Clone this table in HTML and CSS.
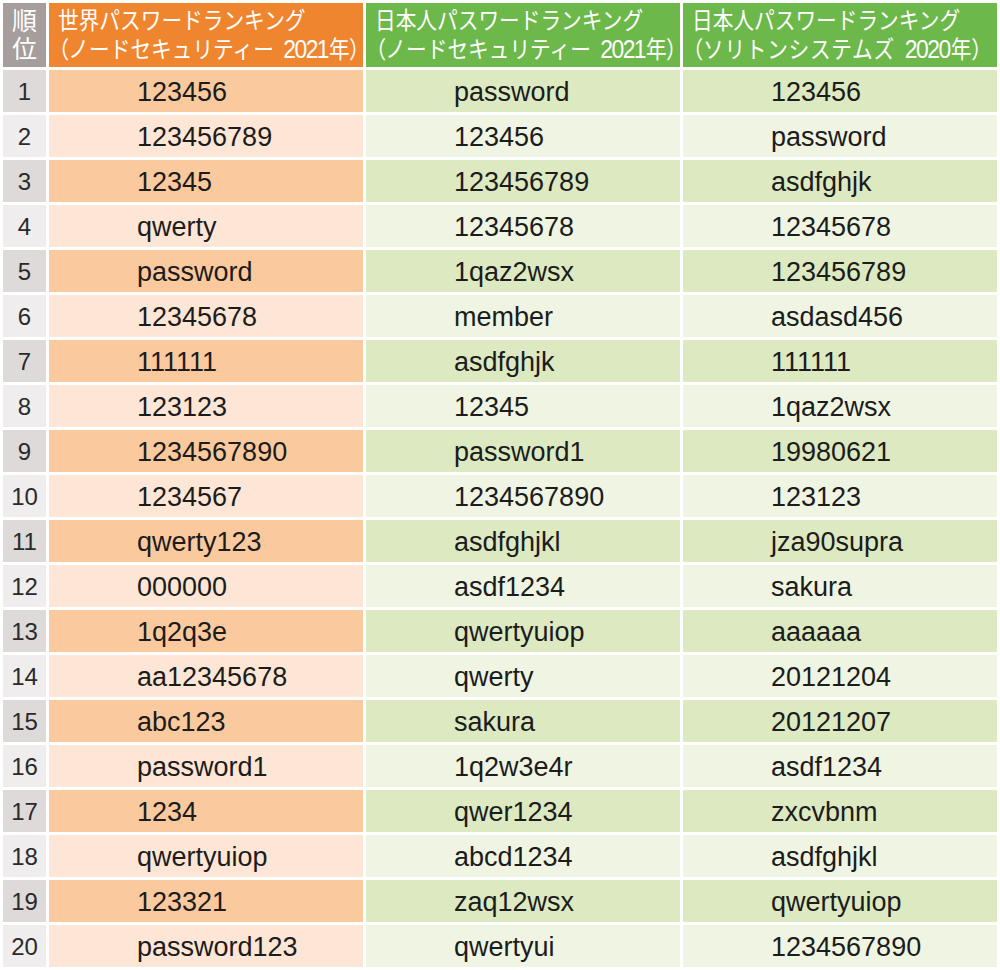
FILE: index.html
```html
<!DOCTYPE html>
<html lang="ja">
<head>
<meta charset="utf-8">
<title>パスワードランキング</title>
<link rel="stylesheet" href="styles.css">
</head>
<body>
<table class="rank-table">
  <colgroup>
    <col class="col-rank">
    <col class="col-data">
    <col class="col-data">
    <col class="col-data">
  </colgroup>
  <thead>
    <tr>
      <th class="h-rank"><span>順</span><span>位</span></th>
      <th class="h-world"><span class="l1">世界パスワードランキング</span><span class="l2"><span class="p">（</span>ノードセキュリティー <span class="y">2021</span>年<span class="p">）</span></span></th>
      <th class="h-jp"><span class="l1">日本人パスワードランキング</span><span class="l2"><span class="p">（</span>ノードセキュリティー <span class="y">2021</span>年<span class="p">）</span></span></th>
      <th class="h-jp"><span class="l1">日本人パスワードランキング</span><span class="l2 loose"><span class="p">（</span>ソリトンシステムズ <span class="y">2020</span>年<span class="p">）</span></span></th>
    </tr>
  </thead>
  <tbody>
    <tr><td class="rank">1</td><td class="world">123456</td><td class="jp">password</td><td class="jp">123456</td></tr>
    <tr><td class="rank">2</td><td class="world">123456789</td><td class="jp">123456</td><td class="jp">password</td></tr>
    <tr><td class="rank">3</td><td class="world">12345</td><td class="jp">123456789</td><td class="jp">asdfghjk</td></tr>
    <tr><td class="rank">4</td><td class="world">qwerty</td><td class="jp">12345678</td><td class="jp">12345678</td></tr>
    <tr><td class="rank">5</td><td class="world">password</td><td class="jp">1qaz2wsx</td><td class="jp">123456789</td></tr>
    <tr><td class="rank">6</td><td class="world">12345678</td><td class="jp">member</td><td class="jp">asdasd456</td></tr>
    <tr><td class="rank">7</td><td class="world">111111</td><td class="jp">asdfghjk</td><td class="jp">111111</td></tr>
    <tr><td class="rank">8</td><td class="world">123123</td><td class="jp">12345</td><td class="jp">1qaz2wsx</td></tr>
    <tr><td class="rank">9</td><td class="world">1234567890</td><td class="jp">password1</td><td class="jp">19980621</td></tr>
    <tr><td class="rank">10</td><td class="world">1234567</td><td class="jp">1234567890</td><td class="jp">123123</td></tr>
    <tr><td class="rank">11</td><td class="world">qwerty123</td><td class="jp">asdfghjkl</td><td class="jp">jza90supra</td></tr>
    <tr><td class="rank">12</td><td class="world">000000</td><td class="jp">asdf1234</td><td class="jp">sakura</td></tr>
    <tr><td class="rank">13</td><td class="world">1q2q3e</td><td class="jp">qwertyuiop</td><td class="jp">aaaaaa</td></tr>
    <tr><td class="rank">14</td><td class="world">aa12345678</td><td class="jp">qwerty</td><td class="jp">20121204</td></tr>
    <tr><td class="rank">15</td><td class="world">abc123</td><td class="jp">sakura</td><td class="jp">20121207</td></tr>
    <tr><td class="rank">16</td><td class="world">password1</td><td class="jp">1q2w3e4r</td><td class="jp">asdf1234</td></tr>
    <tr><td class="rank">17</td><td class="world">1234</td><td class="jp">qwer1234</td><td class="jp">zxcvbnm</td></tr>
    <tr><td class="rank">18</td><td class="world">qwertyuiop</td><td class="jp">abcd1234</td><td class="jp">asdfghjkl</td></tr>
    <tr><td class="rank">19</td><td class="world">123321</td><td class="jp">zaq12wsx</td><td class="jp">qwertyuiop</td></tr>
    <tr><td class="rank">20</td><td class="world">password123</td><td class="jp">qwertyui</td><td class="jp">1234567890</td></tr>
  </tbody>
</table>
</body>
</html>
```

FILE: styles.css
```css
html, body {
  margin: 0;
  padding: 0;
  background: #ffffff;
  overflow: hidden;
}

.rank-table {
  width: 1000px;
  table-layout: fixed;
  border-collapse: separate;
  border-spacing: 3px;
  font-family: "Liberation Sans", "Noto Sans CJK JP", sans-serif;
}

.col-rank { width: 43px; }
.col-data { width: 314px; }

.rank-table th {
  height: 64px;
  padding: 0 0 0 9px;
  color: #ffffff;
  font-weight: normal;
  text-align: left;
  vertical-align: middle;
  font-size: 23.5px;
  letter-spacing: 0;
  line-height: 28px;
  white-space: nowrap;
  box-sizing: border-box;
  overflow: hidden;
}

.rank-table th .l1,
.rank-table th .l2 {
  display: block;
  transform-origin: 0 50%;
  transform: scaleX(0.88);
}

.rank-table th .l2 {
  letter-spacing: 0;
}

.rank-table th .l2.loose {
  letter-spacing: 0.8px;
}

.rank-table th .p {
  font-feature-settings: "palt";
}

.rank-table th .y {
  font-size: 26px;
  letter-spacing: -1.7px;
  margin-left: 4px;
  margin-right: 1px;
}

.h-rank {
  background: #a59e9c;
}

.rank-table th.h-rank {
  padding: 0;
  text-align: center;
  font-size: 25px;
  line-height: 28px;
  letter-spacing: 0;
}

.h-rank span {
  display: block;
}

.h-world { background: #ef852f; }
.h-jp { background: #6cb84a; }

.rank-table td {
  height: 42px;
  padding: 3px 0 0 88px;
  font-size: 27px;
  color: #1c1c1c;
  vertical-align: middle;
  box-sizing: border-box;
  white-space: nowrap;
}

.rank-table td.rank {
  padding: 2px 0 0 0;
  text-align: center;
  font-size: 24px;
  color: #2a2a2a;
}

tbody tr:nth-child(odd) .rank { background: #dedad9; }
tbody tr:nth-child(even) .rank { background: #efeded; }

tbody tr:nth-child(odd) .world { background: #fbc99e; }
tbody tr:nth-child(even) .world { background: #fde6d5; }

tbody tr:nth-child(odd) .jp { background: #dce9c1; }
tbody tr:nth-child(even) .jp { background: #eff5e2; }
```
